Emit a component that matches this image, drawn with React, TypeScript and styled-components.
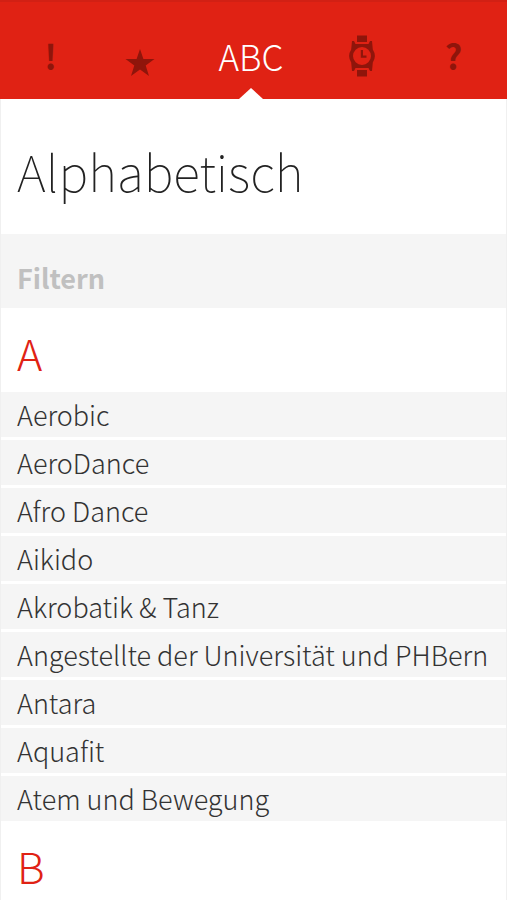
import React, { useState } from 'react';
import styled, { createGlobalStyle } from 'styled-components';

const red = '#e02214';
const darkRed = '#8f150b';
const panel = '#f5f5f5';

const GlobalStyle = createGlobalStyle`
  *, *::before, *::after { box-sizing: border-box; }
  html { scrollbar-width: none; }
  body { margin: 0; }
  body, button, input {
    font-family: "Noto Sans CJK JP", "Noto Sans", sans-serif;
  }
`;

const Page = styled.div`
  min-height: 100vh;
  background: #fff;
  color: #333;
  border: solid rgba(0, 0, 0, 0.06);
  border-width: 0 1px;
`;

const TabBar = styled.nav`
  display: grid;
  grid-template-columns: 22fr 22fr 33fr 22fr 23fr;
  height: 99px;
  margin: 0 -1px;
  padding: 0 7px 0 6px;
  background: ${red};
  border-top: 2px solid #d22014;
`;

const Tab = styled.button<{ $active?: boolean }>`
  position: relative;
  display: flex;
  align-items: center;
  justify-content: center;
  padding: 10px 0 0;
  border: 0;
  background: none;
  color: ${p => (p.$active ? '#fff' : darkRed)};
  font-size: ${p => (p.$active ? 35 : 34)}px;
  font-weight: ${p => (p.$active ? 300 : 700)};
  line-height: 40px;
  cursor: pointer;

  &::after {
    content: ${p => (p.$active ? '""' : 'none')};
    position: absolute;
    bottom: 0;
    left: 50%;
    margin-left: -12px;
    border: solid transparent;
    border-width: 0 12px 11px;
    border-bottom-color: #fff;
  }
`;

const Title = styled.h1`
  margin: 0;
  padding: 41px 16px 34px;
  color: #222;
  font-size: 50px;
  font-weight: 100;
  line-height: 60px;
`;

const FilterInput = styled.input`
  display: block;
  width: 100%;
  height: 74px;
  padding: 12px 16px 0;
  border: 0;
  border-radius: 0;
  outline: 0;
  background: ${panel};
  color: #333;
  font-size: 27px;
  font-weight: 700;

  &::placeholder { color: #c0c0c0; opacity: 1; }
`;

const Letter = styled.h2`
  margin: 0;
  padding: 20px 16px 16px;
  color: ${red};
  font-size: 43px;
  font-weight: 300;
  line-height: 48px;
`;

const List = styled.ul`
  display: flex;
  flex-direction: column;
  gap: 3px;
  margin: 0;
  padding: 0;
  list-style: none;
`;

const Entry = styled.a`
  display: block;
  padding: 0 16px;
  background: ${panel};
  color: #333;
  font-size: 27px;
  font-weight: 300;
  line-height: 45px;
  text-decoration: none;
`;

const StarIcon = () => (
  <svg width="30" height="42" viewBox="0 0 30 42" fill="currentColor" aria-hidden="true">
    <path d="M15 14 18.4 24H29.5L20.7 30.4 24 41 15 34.6 6 41 9.3 30.4.5 24h11.1z" />
  </svg>
);

const WatchIcon = () => (
  <svg width="26" height="42" viewBox="0 0 26 42" fill="currentColor" aria-hidden="true">
    <path d="M8 .5h10V7H8zM8 35h10v6.5H8z" />
    <path
      fillRule="evenodd"
      d="M3 6h2l1.500 3h13L21 6h2l.8 8.500a12 12 0 0 1 0 13L23 36h-2l-1.500-3h-13L5 36H3l-.8-8.500a12 12 0 0 1 0-13zM13 12a9 9 0 1 0 0 18 9 9 0 0 0 0-18z"
    />
    <path d="M11.800 15H14v5.500h3.500v2.200h-5.700z" />
  </svg>
);

const sections = [
  {
    letter: 'A',
    entries: [
      'Aerobic',
      'AeroDance',
      'Afro Dance',
      'Aikido',
      'Akrobatik & Tanz',
      'Angestellte der Universität und PHBern',
      'Antara',
      'Aquafit',
      'Atem und Bewegung',
    ],
  },
  { letter: 'B', entries: [] as string[] },
];

export default function App() {
  const [filter, setFilter] = useState('');
  const matches = (name: string) => name.toLowerCase().includes(filter.toLowerCase());

  return (
    <Page>
      <GlobalStyle />
      <TabBar>
        <Tab aria-label="Hinweise">!</Tab>
        <Tab aria-label="Favoriten"><StarIcon /></Tab>
        <Tab $active aria-current="page">ABC</Tab>
        <Tab aria-label="Zeiten"><WatchIcon /></Tab>
        <Tab aria-label="Hilfe">?</Tab>
      </TabBar>
      <main>
        <Title>Alphabetisch</Title>
        <FilterInput
          type="text"
          aria-label="Filtern"
          placeholder="Filtern"
          value={filter}
          onChange={e => setFilter(e.target.value)}
        />
        {sections.map(section => (
          <section key={section.letter}>
            <Letter>{section.letter}</Letter>
            <List>
              {section.entries.filter(matches).map(name => (
                <li key={name}><Entry href="#">{name}</Entry></li>
              ))}
            </List>
          </section>
        ))}
      </main>
    </Page>
  );
}
